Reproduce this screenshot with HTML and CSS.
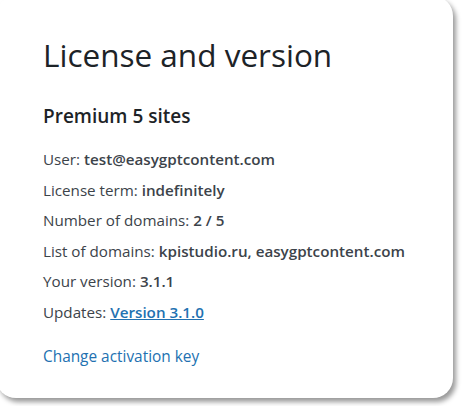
FILE: index.html
```html
<!DOCTYPE html>
<html lang="en">
<head>
<meta charset="utf-8">
<title>License and version</title>
<link rel="stylesheet" href="styles.css">
</head>
<body>
<div class="card">
  <h1 class="title">License and version</h1>
  <h2 class="plan">Premium 5 sites</h2>
  <div class="rows">
    <p class="row">User: <b>test@easygptcontent.com</b></p>
    <p class="row">License term: <b>indefinitely</b></p>
    <p class="row">Number of domains: <b>2 / 5</b></p>
    <p class="row">List of domains: <b>kpistudio.ru, easygptcontent.com</b></p>
    <p class="row">Your version: <b>3.1.1</b></p>
    <p class="row">Updates: <a class="update-link" href="#"><b>Version 3.1.0</b></a></p>
  </div>
  <a class="change-key" href="#">Change activation key</a>
</div>
</body>
</html>
```

FILE: styles.css
```css
html, body {
  margin: 0;
  padding: 0;
  background: #ffffff;
}
body {
  width: 464px;
  height: 406px;
  overflow: hidden;
  font-family: "Open Sans", "Noto Sans", sans-serif;
  color: #3c434a;
}
.card {
  box-sizing: border-box;
  width: 457px;
  height: 402px;
  margin: -4px 0 0 -4px;
  padding: 39px 20px 0 47px;
  background: #ffffff;
  border-radius: 20px;
  box-shadow: 3px 4px 5px rgba(0, 0, 0, 0.4);
}
.title {
  margin: 0;
  font-size: 31.5px;
  line-height: 40px;
  font-weight: 500;
  color: #1d2327;
}
.plan {
  margin: 27px 0 0;
  font-size: 19px;
  line-height: 28px;
  font-weight: 600;
  color: #1d2327;
}
.rows {
  display: flex;
  flex-direction: column;
  margin-top: 14px;
}
.row {
  margin: 0;
  font-size: 15.2px;
  line-height: 30.5px;
}
.row b {
  font-weight: 600;
}
.update-link {
  color: #2271b1;
  text-decoration: underline;
}
.change-key {
  display: block;
  margin-top: 15px;
  font-size: 15.4px;
  line-height: 30px;
  color: #2271b1;
  text-decoration: none;
}
```
